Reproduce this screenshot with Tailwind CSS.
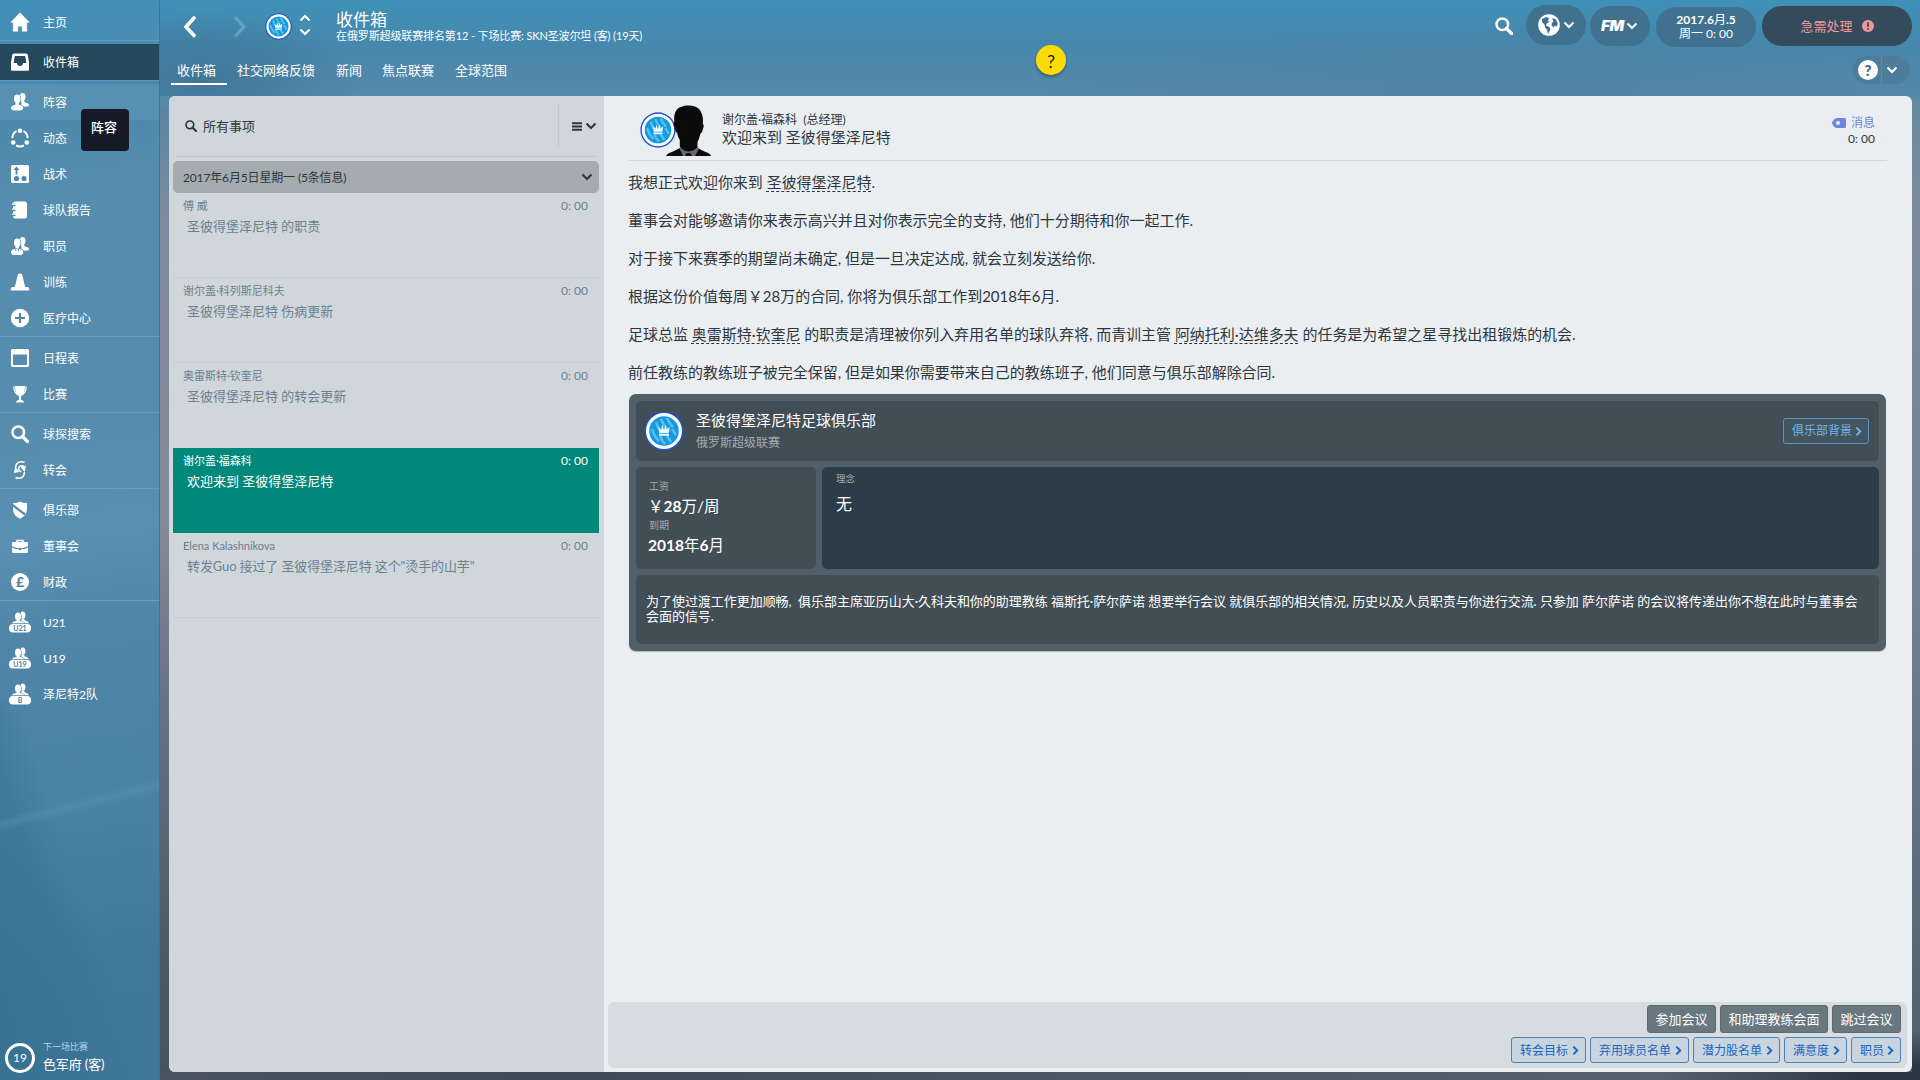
<!DOCTYPE html>
<html lang="zh-CN">
<head>
<meta charset="utf-8">
<title>收件箱</title>
<script src="https://cdn.jsdelivr.net/npm/@tailwindcss/browser@4"></script>
</head>
<body class="w-[1920px] h-[1080px] overflow-hidden font-['Lato','Noto_Sans_CJK_SC',sans-serif] text-white">
<!-- shared symbols -->
<svg class="hidden">
  <symbol id="crest" viewBox="0 0 40 40">
    <circle cx="20" cy="20" r="19.600" fill="#1b55c8"/><circle cx="20" cy="20" r="18" fill="#fff"/><circle cx="20" cy="20" r="14.800" fill="#139be2"/>
    <g stroke="#5fbdee" stroke-width="2.600" fill="none"><path d="M12 11q1.500 6 6 11M17 8q2 6 7 11M23 7q1.500 5 6 9M8 18q2 7 7 12M16 25q2 5 5 8M23 25l4 6M28 18l4 6"/></g>
    <path d="M14.200 15.500l2.900 3.400 1.200-4.800 1.700 4.800 1.700-4.800 1.200 4.800 2.900-3.400-1.100 6.400H15.300zM15 22.800h10v1.900H15z" fill="#f0fbff"/>
  </symbol>
  <symbol id="chev-d" viewBox="0 0 12 8"><path d="M1.500 1.500L6 6l4.500-4.500" fill="none" stroke="currentColor" stroke-width="2.100"/></symbol>
  <symbol id="chev-r" viewBox="0 0 8 12"><path d="M1.500 1.500L6 6 1.500 10.500" fill="none" stroke="currentColor" stroke-width="2.200"/></symbol>
  <symbol id="people" viewBox="0 0 20 20">
    <ellipse cx="12.600" cy="4.800" rx="2.900" ry="3.900"/><path d="M11.300 8h3v2.300q4.900 1 4.900 3 0 1.300-3.500 1.500l-4.400-.3z"/>
    <g stroke="#548cae" stroke-width="1.400" paint-order="stroke"><path d="M5.600 10.200h3.200v2.500q4.500.9 4.500 3.300 0 2.600-6.200 2.600T.9 16q0-2.400 4.700-3.300z"/><ellipse cx="7.300" cy="6.800" rx="3.300" ry="4.300"/></g>
    <path d="M5.700 9h3v4h-3z"/>
  </symbol>
  <symbol id="team" viewBox="0 0 22 22">
    <ellipse cx="13.800" cy="4.200" rx="2.600" ry="3.600"/><path d="M12.500 7.500h2.800v1.800q3.900.8 4.500 2.900h-8z"/>
    <g stroke="#4f86a8" stroke-width="1.200" paint-order="stroke"><path d="M3 12.300q.3-1.700 4.600-2.500V8.500h3v1.300q4.100.8 4.600 2.500z"/><ellipse cx="9" cy="5.500" rx="3" ry="4"/></g>
    <path d="M7.700 8h2.800v3H7.700z"/>
    <rect x="0" y="12.900" width="22" height="8.600" rx="4"/>
  </symbol>
  <symbol id="lens" viewBox="0 0 18 18"><circle cx="7.300" cy="7.300" r="5.800" fill="none" stroke="currentColor" stroke-width="2.500"/><path d="M11.500 11.500l5 5" stroke="currentColor" stroke-width="3.200" stroke-linecap="round"/></symbol>
</svg>

<div class="relative flex w-full h-full bg-[linear-gradient(180deg,#3f90b8_0px,#4787ab_50px,#5a8aa9_100px,#5a86a3_110px,#7f8b9c_220px,#858a9a_520px,#687384_700px,#4c5765_980px,#4a5563_1060px,#46515e_1080px)]">
  <div class="absolute right-0 top-[100px] w-[8px] h-[980px] bg-[linear-gradient(180deg,#6789a2_0px,#7c8a9c_110px,#708191_500px,#5a6873_850px,#56626d_930px,#2e3845_965px,#2c3643_980px)]"></div>
  <div class="absolute left-[160px] bottom-0 w-[1760px] h-[8px] bg-[linear-gradient(90deg,#4a5462_0px,#3f4a58_400px,#4c5764_900px,#55616c_1500px,#46525e_1580px,#2c3744_1700px)]"></div>
  <div class="absolute left-[160px] top-0 w-[1760px] h-[96px] bg-[radial-gradient(ellipse_500px_80px_at_1350px_96px,#50809fcc_0%,transparent_100%),radial-gradient(ellipse_160px_70px_at_40px_80px,#3c7395cc_0%,transparent_100%)]"></div>

  <!-- navigation -->
  <nav class="relative z-10 flex flex-col w-[160px] h-full shrink-0 border-r border-[#407393] text-[12px] leading-[36px] bg-[linear-gradient(172deg,#408fb8_0px,#4a8db3_60px,#4a87aa_110px,#568dae_190px,#568cae_420px,#5a8fb2_540px,#4f86a8_640px,#4b83a4_800px,#41799a_960px,#40789a_1090px)]">
    <div class="absolute inset-x-0 top-[700px] h-[380px] bg-[linear-gradient(72deg,#36708fcc_0%,#36708f80_35%,transparent_50%)]"></div>
    <div class="absolute inset-x-0 top-[780px] h-[50px] bg-[linear-gradient(166deg,transparent_42%,#5c94b566_50%,transparent_58%)]"></div>
    <div class="relative flex flex-col pt-1 h-full [&_a>span:last-child]:pt-0.5">
      <a class="flex items-center h-9 pl-[10px] gap-[13px]"><svg class="size-5" viewBox="0 0 20 20" fill="#fff"><path d="M10 .8L.8 10.300h2.400v8.900h4.600v-5h4.400v5h4.600v-8.900h2.400z" stroke="#fff" stroke-width=".6" stroke-linejoin="round"/></svg><span>主页</span></a>
      <div class="h-1 border-t border-[#5b9cc0]"></div>
      <a class="flex items-center h-9 pl-[10px] gap-[13px] bg-[#25495c]"><svg class="size-5" viewBox="0 0 20 20"><path fill="#fff" fill-rule="evenodd" d="M4 1.500h12q1.500 0 1.800 1.500L19 10.500v7q0 1.200-1.200 1.200H2.200Q1 18.700 1 17.500v-7L2.200 3Q2.500 1.500 4 1.500zM4.800 4L3.700 11h3.200q.6 3 3.100 3t3.100-3h3.200L15.200 4z"/></svg><span>收件箱</span></a>
      <div class="h-1 border-t border-[#5b9abc]"></div>
      <a class="flex items-center h-9 pl-[10px] gap-[13px] bg-[#5791b2]"><svg class="size-5" fill="#fff"><use href="#people"/></svg><span>阵容</span></a>
      <a class="flex items-center h-9 pl-[10px] gap-[13px]"><svg class="size-5" viewBox="0 0 20 20" fill="#fff"><g fill="none" stroke="#fff" stroke-width="2"><path d="M6.500 3.200A8 8 0 0 0 2.300 10M13.500 3.200A8 8 0 0 1 17.700 10M6 17.300a8 8 0 0 0 8 0"/></g><circle cx="10" cy="2.800" r="2.300"/><circle cx="3.200" cy="14.500" r="2.300"/><circle cx="16.800" cy="14.500" r="2.300"/></svg><span>动态</span></a>
      <a class="flex items-center h-9 pl-[10px] gap-[13px]"><svg class="size-5" viewBox="0 0 20 20"><rect x="1" y="1" width="18" height="18" rx="1.500" fill="#fff"/><g fill="#4d86a8"><circle cx="6.500" cy="14.500" r="2.600"/><circle cx="14" cy="14.500" r="2.600"/><path d="M6.500 2.500l3 3.500H7.400v4.500H5.600V6H3.500z"/></g></svg><span>战术</span></a>
      <a class="flex items-center h-9 pl-[10px] gap-[13px]"><svg class="size-5" viewBox="0 0 20 20"><rect x="3" y="1.500" width="14" height="17" rx="2.500" fill="#fff"/><g fill="none" stroke="#4f88aa" stroke-width="2.600"><path d="M2 5h3.500M2 10h3.500M2 15h3.500"/></g><g fill="none" stroke="#fff" stroke-width="1.200"><path d="M2 4.200h3.200q1.500.3 1.500 1M2 9.200h3.200q1.500.3 1.500 1M2 14.200h3.200q1.500.3 1.500 1"/></g></svg><span>球队报告</span></a>
      <a class="flex items-center h-9 pl-[10px] gap-[13px]"><svg class="size-5" viewBox="0 0 20 20" fill="#fff"><use href="#people"/><path d="M1 15q.2 3 1.800 4h8.600q1.600-1 1.800-4z"/><path d="M4.800 12.600l2.300 6.600 2.300-6.600z" fill="#518aac"/><path d="M6.400 13h1.400l.7 4-1.400 2-1.400-2z"/></svg><span>职员</span></a>
      <a class="flex items-center h-9 pl-[10px] gap-[13px]"><svg class="size-5" viewBox="0 0 20 20" fill="#fff"><path d="M8 2q2-1 4 0l3.200 13H18q1.200 0 1.200 1.500V18.500H.8V16.500Q.8 15 2 15h2.800z"/></svg><span>训练</span></a>
      <a class="flex items-center h-9 pl-[10px] gap-[13px]"><svg class="size-5" viewBox="0 0 20 20"><circle cx="10" cy="10" r="9.200" fill="#fff"/><path d="M10 5v10M5 10h10" stroke="#4f88aa" stroke-width="2.200"/></svg><span>医疗中心</span></a>
      <div class="h-1 border-t border-[#659dbd]"></div>
      <a class="flex items-center h-9 pl-[10px] gap-[13px]"><svg class="size-5" viewBox="0 0 20 20"><path fill="#fff" fill-rule="evenodd" d="M2.500 1h15Q19 1 19 2.500v15q0 1.500-1.500 1.500h-15Q1 19 1 17.500v-15Q1 1 2.500 1zM3 6.500V17h14V6.500z"/></svg><span>日程表</span></a>
      <a class="flex items-center h-9 pl-[10px] gap-[13px]"><svg class="size-5" viewBox="0 0 20 20"><path d="M5 2H15c0 6-1.500 9-4 10.500V16q3 .5 3 2.500H6q0-2 3-2.500v-3.500C6.500 11 5 8 5 2z" fill="#fff"/><path d="M5 3H3.800q0 5 3.500 7.500M15 3h1.200q0 5-3.500 7.500" fill="none" stroke="#fff" stroke-width="1.100"/></svg><span>比赛</span></a>
      <div class="h-1 border-t border-[#659dbd]"></div>
      <a class="flex items-center h-9 pl-[11px] gap-[14px]"><svg class="size-[18px]"><use href="#lens"/></svg><span>球探搜索</span></a>
      <a class="flex items-center h-9 pl-[10px] gap-[13px]"><svg class="size-5" viewBox="0 0 20 20"><g fill="none" stroke="#fff" stroke-width="1.500"><path d="M14.500 2.200Q6 0 5.500 8M5.500 17.800Q14 20 14.500 12"/><path d="M14.500 6.500Q9 4.500 8.800 8T11.500 11.500"/></g><path d="M3.800 13l1.600-6.500L9.300 12zM10.500 7l5.700-1.200L14.500 12z" fill="#fff"/></svg><span>转会</span></a>
      <div class="h-1 border-t border-[#659dbd]"></div>
      <a class="flex items-center h-9 pl-[10px] gap-[13px]"><svg class="size-5" viewBox="0 0 20 20"><path d="M3 3q4 .2 7-1.600Q13 3.200 17 3v6q0 6.500-7 9.800Q3 15.500 3 9z" fill="#fff"/><path d="M2.500 5L15 14.500" stroke="#558cae" stroke-width="2.200"/></svg><span>俱乐部</span></a>
      <a class="flex items-center h-9 pl-[10px] gap-[13px]"><svg class="size-5" viewBox="0 0 20 20"><path d="M7 6V4.600h6V6" fill="none" stroke="#fff" stroke-width="1.500"/><rect x="2" y="6" width="16" height="11" rx="1.300" fill="#fff"/><path d="M1.500 10.500q4 2.500 8.500 2.500t8.500-2.500" fill="none" stroke="#558cae" stroke-width="1.200"/><circle cx="10" cy="13" r="1.200" fill="#558cae"/></svg><span>董事会</span></a>
      <a class="flex items-center h-9 pl-[10px] gap-[13px]"><span class="flex items-center justify-center mx-px size-[18px] rounded-full bg-white text-[14px] leading-none font-black text-[#4f86a8]">£</span><span>财政</span></a>
      <div class="h-1 border-t border-[#659dbd]"></div>
      <a class="flex items-center h-9 pl-[9px] gap-3"><span class="relative size-[22px]"><svg class="size-[22px]" fill="#fff"><use href="#team"/></svg><b class="absolute inset-x-0 top-[13px] text-center text-[7px] leading-[9px] font-bold text-[#4a82a4]">U21</b></span><span>U21</span></a>
      <a class="flex items-center h-9 pl-[9px] gap-3"><span class="relative size-[22px]"><svg class="size-[22px]" fill="#fff"><use href="#team"/></svg><b class="absolute inset-x-0 top-[13px] text-center text-[7px] leading-[9px] font-bold text-[#4a82a4]">U19</b></span><span>U19</span></a>
      <a class="flex items-center h-9 pl-[9px] gap-3"><span class="relative size-[22px]"><svg class="size-[22px]" fill="#fff"><use href="#team"/></svg><b class="absolute inset-x-0 top-[13px] text-center text-[7px] leading-[9px] font-bold text-[#4a82a4]">B</b></span><span>泽尼特2队</span></a>
      <div class="flex items-center gap-2 mt-auto mb-[6px] pl-[5px]">
        <span class="flex items-center justify-center mt-0.5 size-[30px] rounded-full border-3 border-white text-[12px] leading-none">19</span>
        <span class="flex flex-col"><span class="text-[9px] leading-[14px] text-[#b3d3e5]">下一场比赛</span><span class="text-[13px] leading-[20px] tracking-[-.01em]">色军府 (客)</span></span>
      </div>
    </div>
    <div class="absolute left-[81px] top-[109px] w-12 h-[42px] rounded-[4px] bg-[#151a26] pt-[8px] pr-[2px] text-center text-[13px] leading-[20px] font-medium">阵容</div>
  </nav>

  <main class="relative flex flex-col w-[1760px] h-full pl-[9px] pr-2 pb-2">
    <header class="flex h-[52px] justify-between">
      <div class="flex h-[52px]">
        <svg class="mt-4 ml-[14px] w-[14px] h-[22px]" viewBox="0 0 14 22"><path d="M11 2L3 10.800l8 8.700" fill="none" stroke="#fff" stroke-width="3.600" stroke-linecap="round"/></svg>
        <svg class="mt-4 ml-9 w-[14px] h-[22px]" viewBox="0 0 14 22"><path d="M3 2l8 8.800-8 8.700" fill="none" stroke="#7cb2cf" stroke-opacity=".6" stroke-width="3.200" stroke-linecap="round"/></svg>
        <svg class="mt-[13px] ml-[18px] size-[27px]"><use href="#crest"/></svg>
        <div class="flex flex-col mt-[14px] ml-[7px] gap-[6px]">
          <svg class="w-[12px] h-[8px] rotate-180"><use href="#chev-d"/></svg>
          <svg class="w-[12px] h-[8px]"><use href="#chev-d"/></svg>
        </div>
        <div class="flex flex-col ml-[25px] pt-[10px]">
          <h1 class="text-[17px] leading-[20px]">收件箱</h1>
          <p class="-mt-px text-[11px] leading-[13px] tracking-[-.12px]">在俄罗斯超级联赛排名第12 - 下场比赛: SKN圣波尔坦 (客) (19天)</p>
        </div>
      </div>
      <div class="flex items-start">
        <svg class="mt-[17px] mr-[13px] size-[18px]"><use href="#lens"/></svg>
        <button class="flex items-center mt-[5px] w-[60px] h-10 rounded-full bg-[#40728f] pl-3 gap-[3px]">
          <svg class="size-[22px]" viewBox="0 0 22 22"><circle cx="11" cy="11" r="10.800" fill="#fff"/><path d="M4 5l4-2 3 1-1 2.500 1.500 1.500-2.500 1-1 2.500 3.500 1.500 1 2.500-2.500 4.500-1-4.500-2-2-.5-3-2.500-2.500zM14 4.500l3.500.5 2.200 4-.7 3.500-2-1-1.200 2.200-2.300-2.700.4-2.300 1.600-1.200z" fill="#40728f"/></svg>
          <svg class="w-[12px] h-[8px]"><use href="#chev-d"/></svg>
        </button>
        <button class="flex items-center mt-[6px] ml-1 w-[60px] h-10 rounded-full bg-[#40728f] pl-[11px] gap-[3px]">
          <span class="w-[22px] text-left origin-left scale-x-110 font-['Inter','Lato',sans-serif] text-[14px] leading-none font-black italic tracking-[-.04em]">FM</span>
          <svg class="w-[12px] h-[8px]"><use href="#chev-d"/></svg>
        </button>
        <div class="mt-[7px] ml-[6px] w-[100px] h-10 rounded-full bg-[#40728f] pt-[6px] text-center text-[12px] leading-[14px]">
          <p><b>2017.6</b>月<b>.5</b></p><p>周一 0: 00</p>
        </div>
        <button class="flex items-center justify-center mt-[6px] ml-[6px] w-[150px] h-10 rounded-full bg-[#334b5a] gap-[9px] pt-px text-[13px] text-[#f2979c]">
          <span>急需处理</span>
          <svg class="size-3 mt-[-2px]" viewBox="0 0 12 12"><circle cx="6" cy="6" r="6" fill="#f2979c"/><path d="M6 2.300v4.400M6 7.900v1.800" stroke="#334b5a" stroke-width="1.800"/></svg>
        </button>
      </div>
    </header>

    <div class="flex h-[44px] justify-between text-[13px]">
      <div class="flex pl-[2px] leading-[18px]">
        <a class="flex flex-col w-14 h-[33px] pt-[9px] pl-[6px] border-b-2 border-white">收件箱</a>
        <a class="pt-[9px] ml-[10px]">社交网络反馈</a>
        <a class="pt-[9px] ml-[21px]">新闻</a>
        <a class="pt-[9px] ml-[20px]">焦点联赛</a>
        <a class="pt-[9px] ml-[21px]">全球范围</a>
      </div>
      <div class="flex items-center mt-1 mr-[2px] w-[57px] h-7 rounded-full bg-[#4d7d9a]">
        <span class="flex items-center justify-center ml-[5px] size-5 rounded-full bg-white text-[15px] leading-none font-black text-[#3c6b88]">?</span>
        <span class="ml-[3px] mr-[4px] w-px h-7 bg-[#5b8dab]"></span>
        <svg class="w-[12px] h-[8px]"><use href="#chev-d"/></svg>
      </div>
    </div>

    <section class="flex w-[1743px] h-[976px] rounded-[6px] overflow-hidden bg-[#ebeef1] text-[#2d363c]">
      <!-- message list -->
      <div class="w-[435px] h-full bg-[#d0d7da] pl-1 pr-[5px]">
        <div class="flex items-center h-[61px] ml-[3px] mr-[2px] border-b border-[#c2cacd] text-[13px]">
          <svg class="ml-[9px] size-3 text-[#2d363c]"><use href="#lens"/></svg>
          <span class="ml-[6px] pt-px grow">所有事项</span>
          <span class="w-px h-11 bg-[#c2cacd] mt-[-1px]"></span>
          <svg class="ml-[13px] w-[10px] h-[9px]" viewBox="0 0 10 9"><path d="M0 1.200h10M0 4.500h10M0 7.800h10" stroke="#2d363c" stroke-width="2"/></svg>
          <svg class="ml-[3px] w-[12px] h-[8px]"><use href="#chev-d"/></svg>
        </div>
        <div class="flex items-center justify-between mt-1 h-8 rounded-[5px] bg-[#a4acaf] pl-[10px] pr-[6px] text-[12px]"><span class="pt-px tracking-[-.15px]">2017年6月5日星期一 (5条信息)</span><svg class="w-[12px] h-[8px]"><use href="#chev-d"/></svg></div>
        <div class="text-[#6c8090]">
          <div class="h-[85px] border-b border-[#c5cdd1] pt-[5px] pl-[10px] pr-[11px]"><div class="flex justify-between text-[11px] leading-4"><span>傅 威</span><span class="text-[12px]">0: 00</span></div><p class="pl-1 pt-[2px] text-[13px] leading-5">圣彼得堡泽尼特 的职责</p></div>
          <div class="h-[85px] border-b border-[#c5cdd1] pt-[5px] pl-[10px] pr-[11px]"><div class="flex justify-between text-[11px] leading-4"><span>谢尔盖·科列斯尼科夫</span><span class="text-[12px]">0: 00</span></div><p class="pl-1 pt-[2px] text-[13px] leading-5">圣彼得堡泽尼特 伤病更新</p></div>
          <div class="h-[85px] pt-[5px] pl-[10px] pr-[11px]"><div class="flex justify-between text-[11px] leading-4"><span>奥雷斯特·钦奎尼</span><span class="text-[12px]">0: 00</span></div><p class="pl-1 pt-[2px] text-[13px] leading-5">圣彼得堡泽尼特 的转会更新</p></div>
          <div class="h-[85px] bg-[#00897a] text-white pt-[5px] pl-[10px] pr-[11px]"><div class="flex justify-between text-[11px] leading-4"><span>谢尔盖·福森科</span><span class="text-[12px]">0: 00</span></div><p class="pl-1 pt-[2px] text-[13px] leading-5">欢迎来到 圣彼得堡泽尼特</p></div>
          <div class="h-[85px] border-b border-[#c5cdd1] pt-[5px] pl-[10px] pr-[11px]"><div class="flex justify-between text-[11px] leading-4"><span>Elena Kalashnikova</span><span class="text-[12px]">0: 00</span></div><p class="pl-1 pt-[2px] text-[13px] leading-5 tracking-[-.12px]">转发Guo 接过了 圣彼得堡泽尼特 这个"烫手的山芋"</p></div>
        </div>
      </div>

      <!-- open message -->
      <div class="flex flex-col w-[1308px] h-full pl-1 pr-[5px] pb-1">
        <div class="flex ml-5 mr-5 h-[65px] border-b border-[#d3d9dc]">
          <svg class="ml-[12px] mt-4 size-[36px]"><use href="#crest"/></svg>
          <svg class="ml-[-10px] mt-[9px] w-[45px] h-[51px]" viewBox="0 0 45 51"><path d="M0 51q1-2.500 6-4l8-4 8.500 6 9-6 8 4q5 1.500 5.500 4z" fill="#0b0b0c"/><path d="M13.500 43.500L16 40h14l3 3.500-4 7.500H17z" fill="#66696c"/><path d="M20.500 48h4l1.500 3h-7z" fill="#0b0b0c"/><path d="M8.500 22Q6.500 19 8.300 17 7 3.500 16 1.800q2-1.500 6-1.200 14-.6 15 14.400 0 2-.3 3.500 1.600 1 .6 4.500-.8 4.500-3 6Q33 34.500 31.500 37v5q-3 4-9 4.500Q17 46 13.800 41.500V35q-2-3-2.700-7Q9 26.500 8.500 22z" fill="#0b0b0c"/></svg>
          <div class="flex flex-col ml-[11px] pt-[16px] grow">
            <p class="text-[12px] leading-[15px] whitespace-pre">谢尔盖·福森科  (总经理)</p>
            <p class="text-[15px] leading-[20px]">欢迎来到 圣彼得堡泽尼特</p>
          </div>
          <div class="pt-[18px] pr-3 text-right text-[12px] leading-[17px]">
            <p class="flex items-center justify-end gap-[5px] text-[#6f86dd]"><svg class="w-[14px] h-[10px]" viewBox="0 0 14 10"><path fill="#6f86dd" fill-rule="evenodd" d="M5 0h7.500Q14 0 14 1.500v7Q14 10 12.500 10H5Q3.500 10 2 8.500 0 6.500 0 5t2-3.500Q3.500 0 5 0zM6 3a2 2 0 1 0 0 4 2 2 0 0 0 0-4z"/></svg>消息</p>
            <p class="-mt-px">0: 00</p>
          </div>
        </div>

        <div class="ml-5 mr-5 pt-[11px] text-[15px] leading-[20px] tracking-[-.02px] flex flex-col gap-[18px]">
          <p>我想正式欢迎你来到 <a class="underline decoration-dashed decoration-1 underline-offset-[3px]">圣彼得堡泽尼特</a>.</p>
          <p>董事会对能够邀请你来表示高兴并且对你表示完全的支持, 他们十分期待和你一起工作.</p>
          <p>对于接下来赛季的期望尚未确定, 但是一旦决定达成, 就会立刻发送给你.</p>
          <p>根据这份价值每周￥28万的合同, 你将为俱乐部工作到2018年6月.</p>
          <p>足球总监 <a class="underline decoration-dashed decoration-1 underline-offset-[3px]">奥雷斯特·钦奎尼</a> 的职责是清理被你列入弃用名单的球队弃将, 而青训主管 <a class="underline decoration-dashed decoration-1 underline-offset-[3px]">阿纳托利·达维多夫</a> 的任务是为希望之星寻找出租锻炼的机会.</p>
          <p>前任教练的教练班子被完全保留, 但是如果你需要带来自己的教练班子, 他们同意与俱乐部解除合同.</p>
        </div>

        <div class="flex flex-col gap-[6px] ml-[21px] mr-[21px] mt-[12px] h-[257px] rounded-[7px] bg-[#516068] px-[7px] py-[7px] text-white shadow-[0_1px_1px_#aab4ba]">
          <div class="flex items-center h-[60px] rounded-[5px] bg-[#414e56] pl-2 pr-[10px]">
            <svg class="size-10"><use href="#crest"/></svg>
            <div class="ml-3 grow"><p class="text-[15px] leading-[22px]">圣彼得堡泽尼特足球俱乐部</p><p class="text-[12px] leading-[23px] text-[#a3acb0]">俄罗斯超级联赛</p></div>
            <button class="flex items-center justify-between w-[86px] h-[26px] rounded-[3px] border border-[#5c93c3] bg-[#43555f] pl-2 pr-[6px] text-[12px] text-[#72b4ec]"><span>俱乐部背景</span><svg class="w-[7px] h-[11px]"><use href="#chev-r"/></svg></button>
          </div>
          <div class="flex h-[102px] gap-[6px]">
            <div class="w-[180px] rounded-[5px] bg-[#414e56] pl-[13px] pt-[11px]">
              <p class="text-[10px] leading-[16px] text-[#a3acb0]">工资</p>
              <p class="ml-[-1px] text-[15.500px] leading-[24px]">￥<b>28</b>万/周</p>
              <p class="text-[10px] leading-[14px] text-[#a3acb0]">到期</p>
              <p class="ml-[-1px] text-[15.500px] leading-[26px]"><b>2018</b>年<b>6</b>月</p>
            </div>
            <div class="grow rounded-[5px] bg-[#2c3c48] pl-[14px] pt-[4px]">
              <p class="text-[9.500px] leading-[16px] text-[#a3acb0]">理念</p>
              <p class="pt-[5px] text-[16px] leading-[24px]">无</p>
            </div>
          </div>
          <div class="h-[69px] rounded-[5px] bg-[#414e56] pl-[10px] pr-[10px] pt-[19px] text-[13px] leading-[15px] tracking-[-.04px]">为了使过渡工作更加顺畅,&nbsp; 俱乐部主席亚历山大·久科夫和你的助理教练 福斯托·萨尔萨诺 想要举行会议 就俱乐部的相关情况, 历史以及人员职责与你进行交流. 只参加 萨尔萨诺 的会议将传递出你不想在此时与董事会会面的信号.</div>
        </div>

        <div class="flex flex-col gap-1 mt-auto h-[66px] rounded-[6px] bg-[#d6dcdf] pt-[3px] pr-[6px]">
          <div class="flex justify-end gap-1 text-[13px] text-white">
            <button class="w-[69px] h-7 rounded-[3px] border border-[#5d6a73] bg-[#697780] pt-px">参加会议</button>
            <button class="w-[108px] h-7 rounded-[3px] border border-[#5d6a73] bg-[#697780] pt-px">和助理教练会面</button>
            <button class="w-[69px] h-7 rounded-[3px] border border-[#5d6a73] bg-[#697780] pt-px">跳过会议</button>
          </div>
          <div class="flex justify-end gap-1 text-[12px] text-[#1b63c4]">
            <button class="flex items-center justify-between w-[75px] h-[26px] rounded-[3px] border border-[#4c80bd] bg-[#c8d5de] pl-2 pr-[6px]"><span class="pt-0.5">转会目标</span><svg class="w-[7px] h-[11px]"><use href="#chev-r"/></svg></button>
            <button class="flex items-center justify-between w-[99px] h-[26px] rounded-[3px] border border-[#4c80bd] bg-[#c8d5de] pl-2 pr-[6px]"><span class="pt-0.5">弃用球员名单</span><svg class="w-[7px] h-[11px]"><use href="#chev-r"/></svg></button>
            <button class="flex items-center justify-between w-[87px] h-[26px] rounded-[3px] border border-[#4c80bd] bg-[#c8d5de] pl-2 pr-[6px]"><span class="pt-0.5">潜力股名单</span><svg class="w-[7px] h-[11px]"><use href="#chev-r"/></svg></button>
            <button class="flex items-center justify-between w-[63px] h-[26px] rounded-[3px] border border-[#4c80bd] bg-[#c8d5de] pl-2 pr-[6px]"><span class="pt-0.5">满意度</span><svg class="w-[7px] h-[11px]"><use href="#chev-r"/></svg></button>
            <button class="flex items-center justify-between w-[50px] h-[26px] rounded-[3px] border border-[#4c80bd] bg-[#c8d5de] pl-2 pr-[6px]"><span class="pt-0.5">职员</span><svg class="w-[7px] h-[11px]"><use href="#chev-r"/></svg></button>
          </div>
        </div>
      </div>
    </section>
  </main>

  <div class="absolute left-[1036px] top-[45px] z-20 flex items-center justify-center size-[30px] rounded-full bg-[#fddc05] shadow-[0_2px_3px_#0005] pt-0.5 text-[18px] leading-none text-[#1d1d1d]">?</div>
</div>
</body>
</html>
